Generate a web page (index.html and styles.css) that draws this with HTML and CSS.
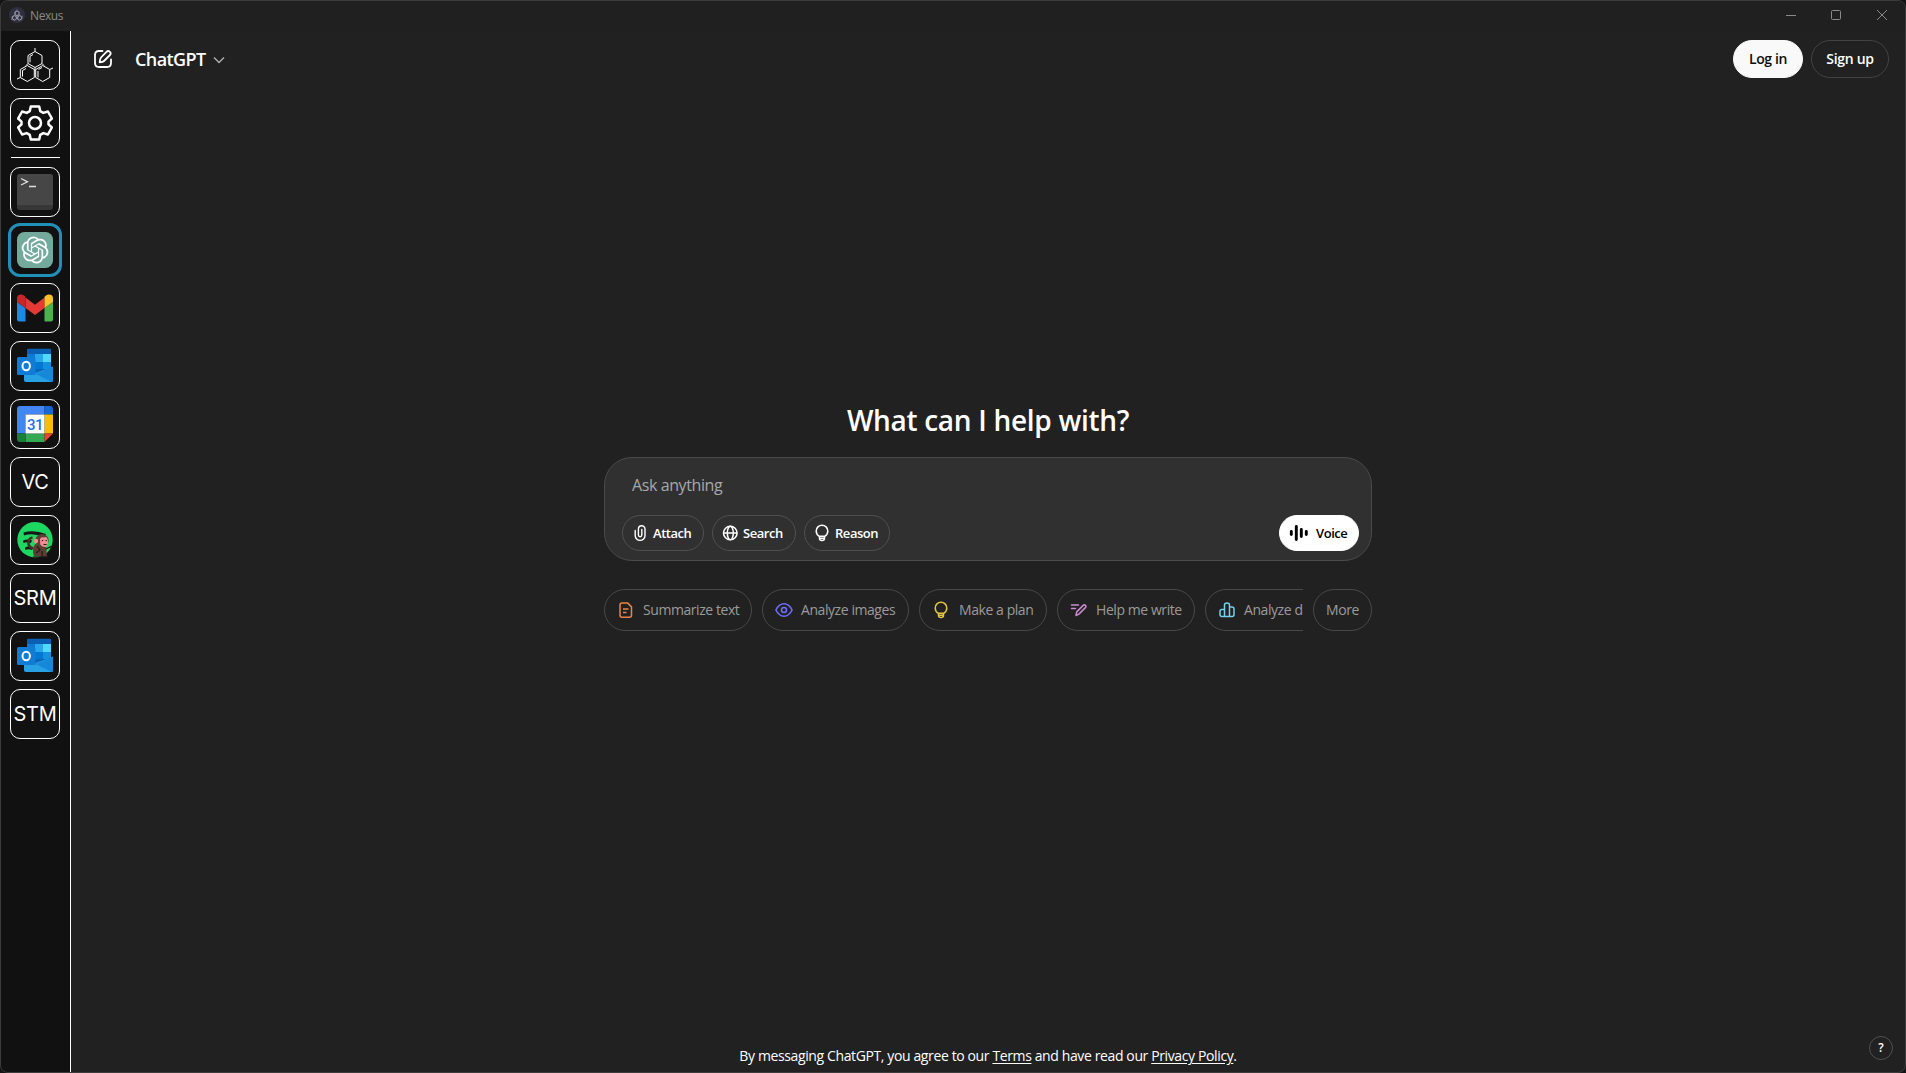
FILE: index.html
```html
<!DOCTYPE html>
<html lang="en">
<head>
<meta charset="utf-8">
<title>Nexus</title>
<link rel="stylesheet" href="styles.css">
</head>
<body>
<svg class="defs" aria-hidden="true">
  <symbol id="outlook" viewBox="0 0 36 36">
    <path d="M10 1.500Q10 .8 11 .8H33Q34 .8 34 2V22H10Z" fill="#0a5fb4"/>
    <path d="M10 6H18V14H10Z" fill="#0f78d4"/><path d="M18 6H26V14H18Z" fill="#28a8ea"/><path d="M26 6H34V14H26Z" fill="#50d9ff"/>
    <path d="M10 14H18V22H10Z" fill="#0358a7"/><path d="M18 14H26V22H18Z" fill="#0078d4"/><path d="M26 14H34V22H26Z" fill="#1490df"/>
    <path d="M10 21H34L26 25H10Z" fill="#0a64b8"/>
    <path d="M7 22L18 25L36 18.500V32.500Q36 34 34.500 34H9Q7 34 7 32Z" fill="#1f93de"/>
    <path d="M36 18.500V33L34.500 34L20 26Z" fill="#1688d8"/>
    <path d="M7 27H20L34.500 34H9Q7 34 7 32Z" fill="#35b3ee" opacity=".4"/>
    <rect y="9" width="18.500" height="18" rx="1.500" fill="#107cd6"/>
    <ellipse cx="9.200" cy="18" rx="3.700" ry="4.300" fill="none" stroke="#fff" stroke-width="2"/>
  </symbol>
  <symbol id="bulb" viewBox="0 0 18 18">
    <g fill="none" stroke="currentColor" stroke-width="1.500" stroke-linejoin="round"><path d="M6.400 12.300C4.500 11.300 3.200 9.300 3.200 7a5.800 5.800 0 0 1 11.600 0c0 2.300-1.300 4.300-3.200 5.300Z"/><path d="M6.500 12.300v2.200q0 2 2.500 2t2.500-2v-2.200M6.500 14.200h5"/></g>
  </symbol>
  <symbol id="molecule" viewBox="0 0 36 36">
    <g fill="none" stroke="currentColor" stroke-width="1">
      <path d="M18 4.500l7 4v8l-7 4-7-4v-8ZM10.300 18.500l7 4v8l-7 4-7-4v-8ZM25.700 18.500l7 4v8l-7 4-7-4v-8Z"/>
      <path d="M18 4.500V1M3.300 30.500L0 32M32.700 22.500L36 21M16 7.500l-3 1.800v6M9 21.500l-3.500 2v6M21 24v6.500M25 20.500l-3.500 2M18 20.500v3M11 16.500l-2 2M25 16.500l2 2"/>
    </g>
  </symbol>
</svg>
<div class="window">
  <header class="titlebar">
    <span class="app-badge"><svg viewBox="0 0 36 36"><use href="#molecule"/><path d="M18 6l6 3.500v7L18 20l-6-3.500v-7ZM10 20l6 3.500v6L10 33l-6-3.500v-6ZM26 20l6 3.500v6L26 33l-6-3.500v-6Z" fill="none" stroke="currentColor" stroke-width="2"/></svg></span>
    <span class="app-name">Nexus</span>
    <svg class="caption-icons" viewBox="0 0 104 12" width="104" height="12" fill="none" stroke="#8a8a8a"><path d="M1 6.500H11"/><rect x="46.500" y="1.500" width="9" height="9" rx="1"/><path d="M92 1l10 10M102 1L92 11"/></svg>
  </header>
  <div class="workspace">
    <nav class="rail">
      <button class="tile"><svg viewBox="0 0 36 36"><use href="#molecule"/></svg></button>
      <button class="tile"><svg viewBox="0 0 36 36" fill="none" stroke="#fff" stroke-width="2.500" stroke-linejoin="round"><path d="M13.800 1.500h8.400l1 4.600 3.100 1.800 4.600-1.400 4 7-3.400 3.100v2.800l3.400 3.100-4 7-4.600-1.400-3.100 1.800-1 4.600h-8.400l-1-4.600-3.100-1.800-4.600 1.400-4-7 3.400-3.100v-2.800l-3.400-3.100 4-7 4.600 1.400 3.100-1.800Z"/><circle cx="18" cy="18" r="6"/></svg></button>
      <hr>
      <button class="tile"><svg viewBox="0 0 36 36"><rect width="36" height="36" rx="3" fill="#373737"/><path d="M3 0h30q3 0 3 3v28H0V3q0-3 3-3Z" fill="#464646"/><path d="M4 4.500l6.500 3.300L4 11M12 12.500h7" fill="none" stroke="#ddd" stroke-width="1.300"/></svg></button>
      <button class="tile active"><svg viewBox="0 0 36 36"><rect width="36" height="36" rx="7.500" fill="#74aa9c"/><path transform="translate(4.600 4.600) scale(1.117)" fill="#fff" d="M22.282 9.821a5.985 5.985 0 0 0-.516-4.911 6.046 6.046 0 0 0-6.510-2.900A6.065 6.065 0 0 0 4.981 4.182a5.985 5.985 0 0 0-3.998 2.900 6.046 6.046 0 0 0 .743 7.097 5.980 5.980 0 0 0 .511 4.911 6.051 6.051 0 0 0 6.515 2.900A5.985 5.985 0 0 0 13.260 24a6.056 6.056 0 0 0 5.772-4.206 5.989 5.989 0 0 0 3.998-2.900 6.056 6.056 0 0 0-.748-7.073zm-9.022 12.608a4.476 4.476 0 0 1-2.876-1.041l.142-.080 4.778-2.758a.795.795 0 0 0 .393-.681v-6.737l2.020 1.169a.071.071 0 0 1 .038.052v5.583a4.504 4.504 0 0 1-4.495 4.494zm-9.661-4.125a4.471 4.471 0 0 1-.535-3.014l.142.085 4.783 2.758a.771.771 0 0 0 .781 0l5.843-3.369v2.332a.080.080 0 0 1-.033.062L9.740 19.950a4.499 4.499 0 0 1-6.141-1.646zM2.341 7.896a4.485 4.485 0 0 1 2.366-1.973V11.600a.766.766 0 0 0 .388.677l5.814 3.354-2.020 1.169a.076.076 0 0 1-.071 0l-4.830-2.787A4.504 4.504 0 0 1 2.341 7.872zm16.596 3.856L13.104 8.364 15.119 7.200a.076.076 0 0 1 .071 0l4.830 2.791a4.494 4.494 0 0 1-.677 8.104v-5.677a.790.790 0 0 0-.407-.667zm2.011-3.023l-.142-.085-4.774-2.782a.776.776 0 0 0-.785 0L9.409 9.230V6.897a.066.066 0 0 1 .028-.062l4.830-2.787a4.499 4.499 0 0 1 6.680 4.660zM8.307 12.863l-2.020-1.164a.080.080 0 0 1-.038-.057V6.074a4.499 4.499 0 0 1 7.376-3.454l-.142.081L8.704 5.459a.795.795 0 0 0-.393.681zm1.098-2.365l2.602-1.500 2.607 1.500v2.999l-2.597 1.500-2.607-1.500Z"/></svg></button>
      <button class="tile"><svg viewBox="0 0 36 36"><path d="M0 12l8.500 6v13.500H2q-2 0-2-2Z" fill="#1e88e5"/><path d="M36 12l-8.500 6v13.500H34q2 0 2-2Z" fill="#4caf50"/><path d="M8.500 7.500L18 14.700l9.500-7.200V18L18 25 8.500 18Z" fill="#e53935"/><path d="M0 8.500Q0 4.500 4 4.500q1.700 0 3 1l1.500 1.200V18L0 12Z" fill="#c62828"/><path d="M36 8.500q0-4-4-4-1.700 0-3 1l-1.500 1.200V18L36 12Z" fill="#fbc02d"/></svg></button>
      <button class="tile"><svg><use href="#outlook"/></svg></button>
      <button class="tile"><svg viewBox="0 0 36 36"><path d="M3 0H27.500V8.500H8.500V27.500H0V3Q0 0 3 0Z" fill="#4285f4"/><path d="M27.500 0H33Q36 0 36 3V8.500H27.500Z" fill="#1967d2"/><path d="M27.500 8.500H36v19h-8.500Z" fill="#fbbc04"/><path d="M8.500 27.500h19V36h-19Z" fill="#34a853"/><path d="M0 27.500h8.500V36H3Q0 36 0 33Z" fill="#188038"/><path d="M27.500 27.500H36L27.500 36Z" fill="#ea4335"/><path d="M8.500 8.500h19v19h-19Z" fill="#fff"/><text x="18" y="23.800" text-anchor="middle" class="date">31</text></svg></button>
      <button class="tile">VC</button>
      <button class="tile"><svg viewBox="0 0 36 36"><circle cx="18" cy="17.700" r="17.700" fill="#1ed760"/><path d="M6.500 10.500Q17 7.500 29 12L27 15Q16 10.500 7 13.500ZM6 18.500Q11 16.500 15 18.500L14 21Q10 19.500 6.500 21ZM8 25.500Q12 23.500 15 25.500V28Q11 26.500 8.500 28Z" fill="#161616"/><path d="M16.500 26.500Q11 25 11.500 20.500Q12 16 15.500 15.500" fill="none" stroke="#43302a" stroke-width="2.600"/><path d="M17 34.500Q14.500 28 18 22L29 23.500L30 34.500Z" fill="#5a4034"/><circle cx="25" cy="18.500" r="6.600" fill="#5a4034"/><circle cx="19" cy="19" r="2.200" fill="#f08b91"/><path d="M23 17q1-2.500 3.500-1.500 3-1.500 4.200 1.500l.5 4-2 4q-4 .5-6-2.500Z" fill="#f08b91"/><path d="M25.500 18v1M29.200 18v1M26.500 22.500h3M29 27l5-2.500 1 4.500M20 24l3 4-4 3M25 29v5M16 35h15" fill="none" stroke="#211916" stroke-width="1.200"/></svg></button>
      <button class="tile">SRM</button>
      <button class="tile"><svg><use href="#outlook"/></svg></button>
      <button class="tile">STM</button>
    </nav>
    <main class="chat">
      <div class="chat-header">
        <svg class="compose" viewBox="0 0 20 20" fill="none" stroke="#fff" stroke-width="1.800" stroke-linecap="round" stroke-linejoin="round"><path d="M9.500 2H6Q2 2 2 6v8q0 4 4 4h8q4 0 4-4v-3.500"/><path d="M13.500 2.800q1.500-1.500 3.200-.2 1.800 1.600.3 3.400L11 12q-1 1-4.300 1.300Q6.800 10 8 8.500Z"/></svg>
        <span class="brand">ChatGPT</span>
        <svg class="chevron" viewBox="0 0 12 8" fill="none" stroke="#b0b0b0" stroke-width="1.400"><path d="M1 1.500l5 5 5-5"/></svg>
        <button class="auth login"><span>Log in</span></button>
        <button class="auth signup"><span>Sign up</span></button>
      </div>
      <section class="center">
        <h1><span>What can I help with?</span></h1>
        <div class="composer">
          <div class="prompt">Ask anything</div>
          <div class="tools">
            <button class="tool attach"><svg viewBox="0 0 18 18" fill="none" stroke="currentColor" stroke-width="1.400" stroke-linecap="round"><path d="M4.200 6.500v5a4.900 4.900 0 0 0 9.800 0V5a3.300 3.300 0 0 0-6.600 0v6a1.700 1.700 0 0 0 3.400 0V5.500"/></svg><span>Attach</span></button>
            <button class="tool search"><svg viewBox="0 0 18 18" fill="none" stroke="currentColor" stroke-width="1.500"><circle cx="9.300" cy="9" r="6.800"/><ellipse cx="9.300" cy="9" rx="3" ry="6.800"/><path d="M2.500 9h13.600"/></svg><span>Search</span></button>
            <button class="tool reason"><svg><use href="#bulb"/></svg><span>Reason</span></button>
            <button class="tool voice"><svg viewBox="0 0 20 18" stroke="#000" stroke-width="2.900" stroke-linecap="round"><path d="M2.300 7.500v3M7.300 2.500v13M12.300 5.500v7M17.300 7.500v3"/></svg><span>Voice</span></button>
          </div>
        </div>
        <div class="suggestions">
          <div class="strip">
            <button class="chip c1"><svg viewBox="0 0 18 18" fill="none" stroke="#ea8444" stroke-width="1.500" stroke-linejoin="round"><path d="M5 1.900h5.500L14.500 5.900v8.300q0 2-2 2H5q-2 0-2-2V3.900q0-2 2-2ZM6 8h5.500M6 11.500h3.500"/></svg><span>Summarize text</span></button>
            <button class="chip c2"><svg viewBox="0 0 18 18" fill="none" stroke="#6c71ff" stroke-width="1.500"><path d="M.9 9Q4 2.800 9 2.800T17.100 9Q14 15.200 9 15.200T.9 9Z"/><circle cx="9" cy="9" r="2.500"/></svg><span>Analyze images</span></button>
            <button class="chip c3"><svg><use href="#bulb"/></svg><span>Make a plan</span></button>
            <button class="chip c4"><svg viewBox="0 0 18 18" fill="none" stroke="#cb8bd0" stroke-width="1.500" stroke-linecap="round" stroke-linejoin="round"><path d="M1.500 4h7M1.500 7.500h4M6 14.500l.7-3.600 6.500-6.500q1-1 2.200 0t0 2.200l-6.500 6.500Z"/></svg><span>Help me write</span></button>
            <button class="chip c5"><svg viewBox="0 0 18 18" fill="none" stroke="#76d0eb" stroke-width="1.500" stroke-linejoin="round"><path d="M6.500 15.500V4q0-2 2.500-2t2.500 2v11.500H4q-2 0-2-2v-3q0-2 2-2h2.500M11.500 6H14q2 0 2 2v5.500q0 2-2 2h-2.500"/></svg><span>Analyze data</span></button>
          </div>
          <button class="chip more"><span>More</span></button>
        </div>
      </section>
      <footer><span class="legal">By messaging ChatGPT, you agree to our <u>Terms</u> and have read our <u>Privacy Policy</u>.</span><button class="help">?</button></footer>
    </main>
  </div>
</div>
</body>
</html>
```
FILE: styles.css
```css
* { box-sizing: border-box; }
body { margin: 0; background: #151515; color: #fff; font-family: "Open Sans", "Noto Sans", sans-serif; }
button { font: inherit; color: inherit; background: none; padding: 0; margin: 0; }
svg { display: block; flex: none; }
.defs { display: none; }

.window { width: 1906px; height: 1073px; display: flex; flex-direction: column; overflow: hidden; border: 1px solid #3c3c3c; border-radius: 8px; background: #212121; }
.titlebar { height: 30px; flex: none; display: flex; align-items: center; padding: 0 16px 2px 8px; background: #202020; }
.app-badge { width: 16px; height: 16px; border-radius: 50%; background: #2e3042; color: #b8b8c4; display: grid; place-items: center; }
.app-badge svg { width: 12px; height: 12px; }
.app-name { margin-left: 5px; font-size: 12px; letter-spacing: -.4px; color: #8a8a8a; }
.caption-icons { margin-left: auto; }
.workspace { flex: 1; min-height: 0; display: flex; }

.rail { width: 70px; flex: none; display: flex; flex-direction: column; gap: 8px; padding: 9px 10px 0 9px; background: #111; border-right: 1px solid #fff; }
.rail hr { width: 49px; height: 1px; margin: 1px 0 0 1px; border: 0; background: #fff; flex: none; }
.rail hr + .tile { margin-top: 1px; }
.tile { width: 50px; height: 50px; flex: none; display: grid; place-items: center; border: 1px solid #fff; border-radius: 10px; font: 20px/24px Inter, sans-serif; letter-spacing: -.3px; }
.tile svg { width: 36px; height: 36px; }
.tile.active { width: 54px; height: 54px; margin: -2px; border: 3px solid #2190b8; border-radius: 12px; }
.date { font: 500 15px Roboto, sans-serif; letter-spacing: -.5px; fill: #1a73e8; }

.chat { flex: 1; min-width: 0; display: flex; flex-direction: column; }
.chat-header { height: 56px; flex: none; display: flex; align-items: center; padding: 0 16px 0 22px; }
.compose { width: 20px; height: 20px; }
.brand { margin-left: 22px; width: 71px; white-space: nowrap; font-size: 18px; font-weight: 600; letter-spacing: -.6px; }
.chevron { width: 12px; height: 8px; margin: 1px 0 0 7px; }
.auth { height: 38px; padding-bottom: 1px; border-radius: 19px; border: 1px solid #424242; font-size: 14px; font-weight: 600; white-space: nowrap; }
.login { width: 70px; margin-left: auto; background: #f9f9f9; border-color: #f9f9f9; color: #0d0d0d; letter-spacing: -.4px; }
.signup { width: 78px; margin-left: 8px; letter-spacing: -.3px; }

.center { width: 768px; margin: 314px auto 0; }
h1 { margin: 0 0 18px; height: 38px; line-height: 38px; text-align: center; white-space: nowrap; font-size: 28px; font-weight: 600; letter-spacing: -.3px; }
.composer { height: 104px; padding: 13px 12px 9px 17px; border: 1px solid #4a4a4a; border-radius: 28px; background: #303030; display: flex; flex-direction: column; justify-content: space-between; }
.prompt { padding-left: 10px; font-size: 16px; line-height: 28px; letter-spacing: -.4px; color: #a8a8a8; }
.tools { display: flex; gap: 8px; }
.tool { height: 36px; border: 1px solid #505050; border-radius: 18px; display: flex; align-items: center; gap: 4px; padding-left: 8px; font-size: 13px; font-weight: 600; letter-spacing: -.45px; white-space: nowrap; }
.tool svg { width: 18px; height: 18px; }
.attach { width: 82px; } .search { width: 84px; } .reason { width: 86px; }
.voice { width: 80px; margin-left: auto; background: #fff; border-color: #fff; color: #000; gap: 7px; padding-left: 9px; }
.voice svg { width: 20px; }
.suggestions { margin-top: 28px; display: flex; gap: 10px; }
.strip { width: 699px; display: flex; gap: 10px; overflow: hidden; }
.chip { height: 42px; flex: none; border: 1px solid #484848; border-radius: 21px; display: flex; align-items: center; gap: 8px; padding: 0 0 1px 12px; font-size: 14px; letter-spacing: -.43px; color: #9b9b9b; white-space: nowrap; }
.chip svg { width: 18px; height: 18px; }
.c1 { width: 148px; } .c2 { width: 147px; } .c3 { width: 128px; } .c4 { width: 138px; } .c5 { width: 136px; }
.c3 svg { color: #e2c541; }
.c3 span { margin-left: 1px; }
.more { width: 59px; justify-content: center; padding: 0 0 1px; }

footer { margin-top: auto; height: 34px; display: flex; justify-content: center; position: relative; font-size: 14px; line-height: 36px; letter-spacing: -.38px; white-space: nowrap; }
footer u { text-underline-offset: 2px; }
.help { position: absolute; right: 12px; top: -2px; width: 24px; height: 24px; border: 1px solid #505050; border-radius: 50%; font-size: 12px; font-weight: 600; line-height: 20px; }
```
